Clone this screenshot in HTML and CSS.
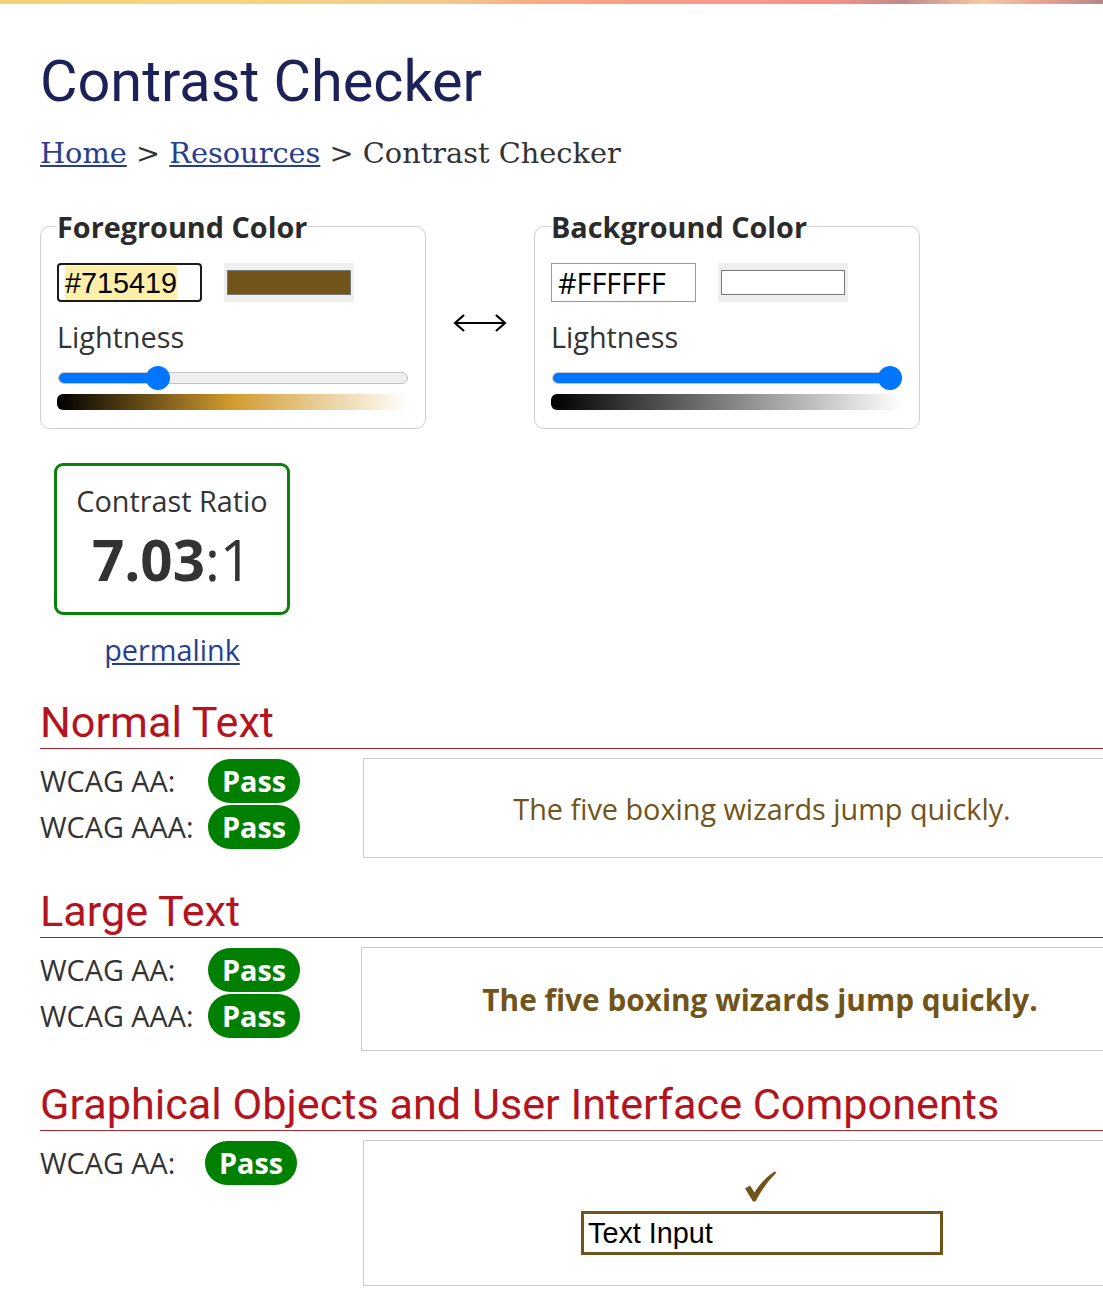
FILE: index.html
```html
<!DOCTYPE html>
<html lang="en">
<head>
<meta charset="utf-8">
<title>Contrast Checker</title>
<link rel="stylesheet" href="styles.css">
</head>
<body>
<div class="topbar"></div>
<main class="page">
  <h1 class="title">Contrast Checker</h1>
  <nav class="crumbs"><a href="#">Home</a> &gt; <a href="#">Resources</a> &gt; Contrast Checker</nav>

  <div class="pickers">
    <fieldset class="picker">
      <legend class="picker-legend">Foreground Color</legend>
      <div class="color-row">
        <div class="hex hex-focus"><span class="hex-sel">#715419</span></div>
        <div class="swatch"><div class="swatch-inner swatch-fg"></div></div>
      </div>
      <div class="light-label">Lightness</div>
      <div class="slider">
        <div class="track"><div class="fill" style="width:100px"></div></div>
        <div class="thumb" style="left:88px"></div>
      </div>
      <div class="grad grad-fg"></div>
    </fieldset>

    <div class="swap">
      <svg class="swap-icon" width="54" height="22" viewBox="0 0 54 22" aria-hidden="true">
        <path d="M2 11H52M11 3L2 11L11 19M43 3L52 11L43 19" fill="none" stroke="#000" stroke-width="2.2" stroke-linejoin="miter"/>
      </svg>
    </div>

    <fieldset class="picker">
      <legend class="picker-legend">Background Color</legend>
      <div class="color-row">
        <div class="hex hex-plain">#FFFFFF</div>
        <div class="swatch"><div class="swatch-inner swatch-bg"></div></div>
      </div>
      <div class="light-label">Lightness</div>
      <div class="slider">
        <div class="track"><div class="fill" style="width:338px"></div></div>
        <div class="thumb" style="left:326px"></div>
      </div>
      <div class="grad grad-bg"></div>
    </fieldset>
  </div>

  <div class="ratio-wrap">
    <div class="ratio-box">
      <div class="ratio-label">Contrast Ratio</div>
      <div class="ratio-value"><b>7.03</b>:1</div>
    </div>
    <a class="permalink" href="#">permalink</a>
  </div>

  <section class="result">
    <h2 class="result-title">Normal Text</h2>
    <div class="result-body">
      <div class="checks">
        <div class="check"><span class="check-label">WCAG AA:</span><span class="badge">Pass</span></div>
        <div class="check"><span class="check-label">WCAG AAA:</span><span class="badge">Pass</span></div>
      </div>
      <div class="sample sample-normal">The five boxing wizards jump quickly.</div>
    </div>
  </section>

  <section class="result">
    <h2 class="result-title">Large Text</h2>
    <div class="result-body">
      <div class="checks checks-large">
        <div class="check"><span class="check-label">WCAG AA:</span><span class="badge">Pass</span></div>
        <div class="check"><span class="check-label">WCAG AAA:</span><span class="badge">Pass</span></div>
      </div>
      <div class="sample sample-large">The five boxing wizards jump quickly.</div>
    </div>
  </section>

  <section class="result">
    <h2 class="result-title">Graphical Objects and User Interface Components</h2>
    <div class="result-body">
      <div class="checks">
        <div class="check"><span class="check-label check-label-ui">WCAG AA:</span><span class="badge">Pass</span></div>
      </div>
      <div class="sample sample-ui">
        <svg class="tick" width="33" height="31" viewBox="0 0 33 31" aria-hidden="true">
          <path d="M1 17.5L6 14.5L10.5 21.5Q18.5 8 30.5 0.5L32.5 1.5Q21 12.5 11.5 30.5L9 30.5Z" fill="#715419"/>
        </svg>
        <div class="ui-input">Text Input</div>
      </div>
    </div>
  </section>
</main>
</body>
</html>
```
FILE: styles.css
```css
html, body {
  margin: 0;
  padding: 0;
  overflow-x: hidden;
  background: #fff;
}
body {
  font-family: "Open Sans", "Noto Sans", sans-serif;
  color: #333;
}
.topbar {
  height: 4px;
  background: linear-gradient(to right, #f2d07c 0%, #f8d47c 20%, #f5cc86 33%, #f2c98c 40%, #f9ae80 48%, #f69c86 58%, #f7988c 68%, #ee9088 76%, #c08a8c 82%, #f5c8a2 89%, #e69e92 95%, #b08888 100%);
}
.page {
  width: 1200px;
  padding: 0 0 60px 40px;
}
.title {
  font-family: Roboto, "Liberation Sans", sans-serif;
  font-weight: 400;
  font-size: 57.6px;
  line-height: 67px;
  color: #1d2158;
  margin: 44px 0 0 0;
}
.crumbs {
  font-family: "DejaVu Serif", "Liberation Serif", serif;
  font-size: 28.8px;
  line-height: 40px;
  margin-top: 18px;
  color: #333;
}
.crumbs a {
  color: #283e8e;
  text-decoration: underline;
}
.pickers {
  display: flex;
  align-items: center;
  gap: 27px;
  margin-top: 34px;
}
.picker {
  width: 386px;
  box-sizing: border-box;
  margin: 0;
  padding: 0 16px 18px 16px;
  border: 1px solid #cfcfcf;
  border-radius: 10px;
}
.picker-legend {
  padding: 0;
  font-weight: 700;
  font-size: 28.8px;
  line-height: 39px;
  color: #2b2b2b;
}
.color-row {
  display: flex;
  align-items: center;
  gap: 22px;
  margin-top: 17px;
}
.hex {
  box-sizing: border-box;
  width: 145px;
  height: 39px;
  display: flex;
  align-items: center;
  font-size: 28.8px;
  color: #000;
}
.hex-focus {
  border: 2px solid #1a1a1a;
  border-radius: 4px;
  padding-left: 6px;
  font-family: "Liberation Sans", Arial, sans-serif;
}
.hex-sel {
  background: #fdeeaa;
  line-height: 34px;
}
.hex-plain {
  border: 1px solid #9a9a9a;
  padding-left: 6px;
  font-family: "Open Sans", sans-serif;
}
.swatch {
  box-sizing: border-box;
  width: 130px;
  height: 39px;
  background: #efefef;
  padding: 7px 3px;
}
.swatch-inner {
  box-sizing: border-box;
  height: 100%;
  border: 1px solid #777;
}
.swatch-fg { background: #715419; }
.swatch-bg { background: #ffffff; }
.light-label {
  font-size: 28.8px;
  line-height: 38px;
  margin-top: 16px;
  color: #333;
}
.slider {
  position: relative;
  height: 24px;
  margin-top: 10px;
  display: flex;
  align-items: center;
}
.track {
  box-sizing: border-box;
  width: 350px;
  height: 12px;
  margin-left: 1px;
  border-radius: 6px;
  background: #efefef;
  border: 1px solid #c4c4c4;
  overflow: hidden;
  position: relative;
}
.fill {
  height: 100%;
  background: #0075ff;
}
.thumb {
  position: absolute;
  top: 0;
  width: 24px;
  height: 24px;
  border-radius: 50%;
  background: #0075ff;
  margin-left: 1px;
}
.grad {
  height: 16px;
  width: 351px;
  margin-top: 4px;
  border-radius: 6px;
}
.grad-fg { background: linear-gradient(to right, #000 0%, #d29b2f 50%, #fff 100%); }
.grad-bg { background: linear-gradient(to right, #000 0%, #808080 50%, #fff 100%); }
.swap {
  display: flex;
  align-items: center;
  margin-top: 10px;
}
.swap-icon { display: block; }
.ratio-wrap {
  display: inline-flex;
  flex-direction: column;
  align-items: center;
  margin: 34px 0 0 14px;
}
.ratio-box {
  box-sizing: border-box;
  width: 236px;
  height: 152px;
  border: 3px solid #0a820a;
  border-radius: 9px;
  text-align: center;
  padding-top: 16px;
}
.ratio-label {
  font-size: 28.8px;
  line-height: 38px;
  color: #333;
}
.ratio-value {
  font-size: 56.5px;
  line-height: 70px;
  color: #333;
  margin-top: 5px;
}
.ratio-value b { font-weight: 700; }
.permalink {
  font-size: 28.8px;
  line-height: 38px;
  margin-top: 16px;
  color: #283e8e;
}
.result {
  margin-top: 29px;
}
.result-title {
  font-family: Roboto, "Liberation Sans", sans-serif;
  font-weight: 400;
  font-size: 43.2px;
  line-height: 50px;
  color: #b3141e;
  margin: 0;
  border-bottom: 1px solid #a5252b;
}
.result-body {
  display: flex;
  align-items: flex-start;
  margin-top: 9px;
}
.checks {
  width: 323px;
  flex: none;
}
.checks-large { width: 321px; }
.check {
  display: flex;
  align-items: center;
  height: 46px;
}
.check-label {
  width: 168px;
  font-size: 28.8px;
  line-height: 38px;
  color: #333;
}
.check-label-ui { width: 165px; }
.badge {
  display: inline-block;
  background: #008000;
  color: #fff;
  font-weight: 700;
  font-size: 28.8px;
  line-height: 44px;
  height: 44px;
  padding: 0 14px;
  border-radius: 22px;
}
.sample {
  box-sizing: border-box;
  width: 798px;
  border: 1px solid #cccccc;
  display: flex;
  flex-direction: column;
  align-items: center;
  justify-content: center;
  color: #715419;
}
.sample-normal {
  height: 100px;
  font-size: 28.8px;
}
.sample-large {
  height: 104px;
  font-size: 29.8px;
  font-weight: 700;
}
.sample-ui {
  height: 146px;
  justify-content: flex-start;
  padding-top: 30px;
}
.tick {
  display: block;
  margin-left: -4px;
}
.ui-input {
  box-sizing: border-box;
  width: 362px;
  height: 44px;
  border: 3px solid #715419;
  font-family: "Liberation Sans", Arial, sans-serif;
  font-size: 28.8px;
  line-height: 38px;
  color: #000;
  padding-left: 4px;
  margin-top: 9px;
}
```
